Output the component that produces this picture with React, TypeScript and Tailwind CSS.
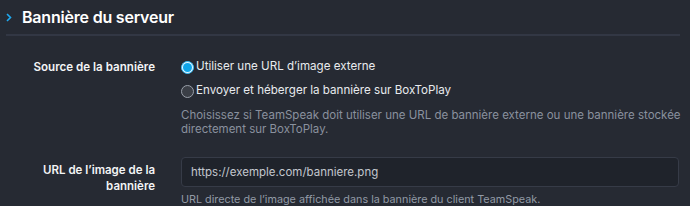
import React, { useState } from 'react';

const font = { fontFamily: 'Inter, "Noto Sans", sans-serif' };

function Radio({ checked }: { checked: boolean }) {
  if (checked) {
    return (
      <span className="w-[13px] h-[13px] shrink-0 rounded-full bg-[#e6f6ff] flex items-center justify-center border border-[#38bdf8]">
        <span className="w-[9px] h-[9px] rounded-full bg-[#0ea5e9]" />
      </span>
    );
  }
  return <span className="w-[13px] h-[13px] shrink-0 rounded-full bg-[#3b3f47] border border-[#9aa0aa]" />;
}

export default function App() {
  const [source, setSource] = useState<'url' | 'upload'>('url');
  const [url, setUrl] = useState('https://exemple.com/banniere.png');

  return (
    <div className="w-[690px] h-[206px] overflow-hidden bg-[#262a33] text-white" style={font}>
      <div className="pl-[6px] pr-[10px]">
        <div className="h-[34px] flex items-center">
          <svg width="6" height="9" viewBox="0 0 6 9" className="shrink-0">
            <path d="M1 1l3.5 3.5L1 8" fill="none" stroke="#1eaaf1" strokeWidth="1.6" />
          </svg>
          <h2 className="ml-[10px] text-[16px] font-semibold text-white tracking-[-0.2px]">Bannière du serveur</h2>
        </div>
        <div className="h-[2px] bg-[#323744]" />

        <div className="grid grid-cols-[149px_499px] gap-x-[26px] mt-[21px]">
          <div className="text-right text-[11.6px] font-semibold leading-[20px] text-[#f3f4f6]">Source de la bannière</div>
          <div className="min-w-0">
            <div className="flex flex-col gap-[4px]">
              <label className="h-[20px] flex items-center gap-[2px] text-[11.6px] text-[#e8eaee] cursor-pointer" onClick={() => setSource('url')}>
                <Radio checked={source === 'url'} />
                <span>Utiliser une URL d’image externe</span>
              </label>
              <label className="h-[20px] flex items-center gap-[2px] text-[11.6px] text-[#e8eaee] cursor-pointer" onClick={() => setSource('upload')}>
                <Radio checked={source === 'upload'} />
                <span>Envoyer et héberger la bannière sur BoxToPlay</span>
              </label>
            </div>
            <p className="mt-[7px] text-[11.5px] leading-[14px] text-[#8a919e]">
              <span className="block whitespace-nowrap">Choisissez si TeamSpeak doit utiliser une URL de bannière externe ou une bannière stockée</span>
              <span className="block">directement sur BoxToPlay.</span>
            </p>
          </div>

          <div className="mt-[21px] pt-[5px] text-right text-[11.5px] font-semibold leading-[16px] text-[#f3f4f6]">
            URL de l’image de la bannière
          </div>
          <div className="mt-[21px]">
            <input
              value={url}
              onChange={(e) => setUrl(e.target.value)}
              className="w-[498px] h-[30px] px-[9px] rounded-[4px] bg-[#1f232b] border border-[#363b47] text-[11.5px] text-[#c3c7ce] outline-none"
              style={font}
            />
            <p className="mt-[6px] text-[10.8px] leading-[14px] text-[#929aa6]">
              URL directe de l’image affichée dans la bannière du client TeamSpeak.
            </p>
          </div>
        </div>
      </div>
    </div>
  );
}
